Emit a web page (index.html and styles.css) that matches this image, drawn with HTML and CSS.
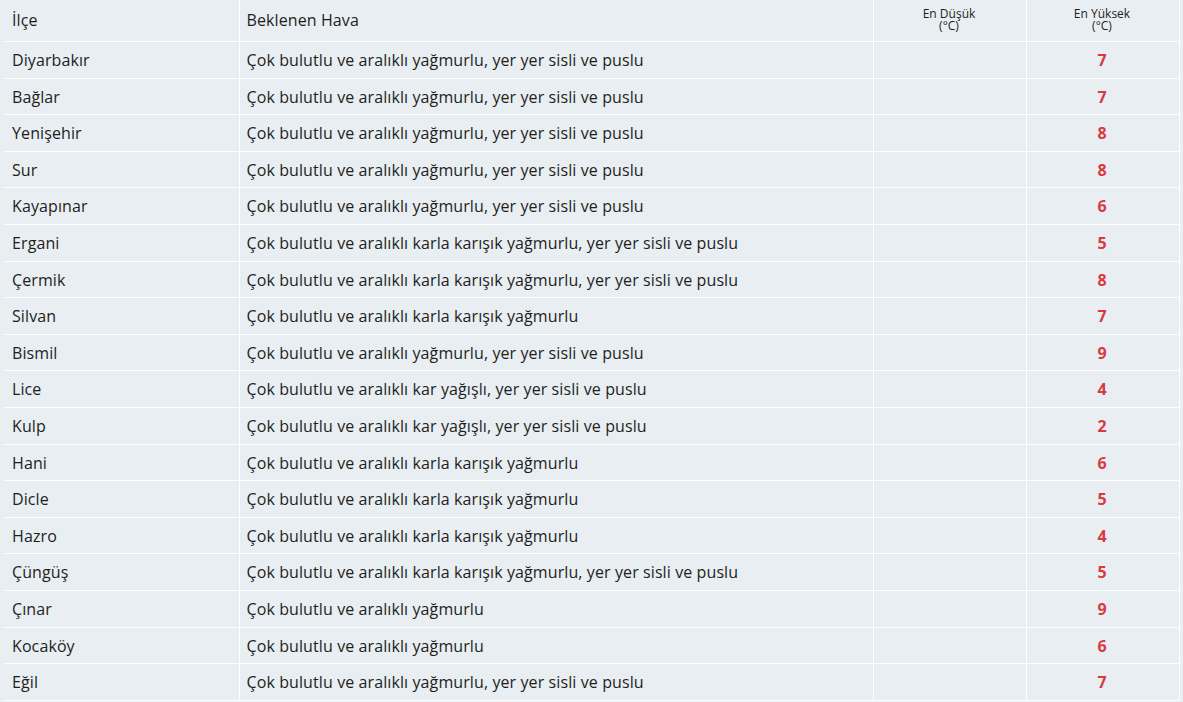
FILE: index.html
```html
<!DOCTYPE html>
<html lang="tr">
<head>
<meta charset="utf-8">
<title>İlçe Hava Tahmini</title>
<link rel="stylesheet" href="styles.css">
</head>
<body>
<div class="wrap">
<table class="forecast">
<colgroup>
<col class="c-ilce"><col class="c-hava"><col class="c-min"><col class="c-max">
</colgroup>
<thead>
<tr>
<th class="left">İlçe</th>
<th class="left">Beklenen Hava</th>
<th class="small">En Düşük<br>(°C)</th>
<th class="small">En Yüksek<br>(°C)</th>
</tr>
</thead>
<tbody>
<tr><td>Diyarbakır</td><td>Çok bulutlu ve aralıklı yağmurlu, yer yer sisli ve puslu</td><td></td><td class="max">7</td></tr>
<tr><td>Bağlar</td><td>Çok bulutlu ve aralıklı yağmurlu, yer yer sisli ve puslu</td><td></td><td class="max">7</td></tr>
<tr><td>Yenişehir</td><td>Çok bulutlu ve aralıklı yağmurlu, yer yer sisli ve puslu</td><td></td><td class="max">8</td></tr>
<tr><td>Sur</td><td>Çok bulutlu ve aralıklı yağmurlu, yer yer sisli ve puslu</td><td></td><td class="max">8</td></tr>
<tr><td>Kayapınar</td><td>Çok bulutlu ve aralıklı yağmurlu, yer yer sisli ve puslu</td><td></td><td class="max">6</td></tr>
<tr><td>Ergani</td><td>Çok bulutlu ve aralıklı karla karışık yağmurlu, yer yer sisli ve puslu</td><td></td><td class="max">5</td></tr>
<tr><td>Çermik</td><td>Çok bulutlu ve aralıklı karla karışık yağmurlu, yer yer sisli ve puslu</td><td></td><td class="max">8</td></tr>
<tr><td>Silvan</td><td>Çok bulutlu ve aralıklı karla karışık yağmurlu</td><td></td><td class="max">7</td></tr>
<tr><td>Bismil</td><td>Çok bulutlu ve aralıklı yağmurlu, yer yer sisli ve puslu</td><td></td><td class="max">9</td></tr>
<tr><td>Lice</td><td>Çok bulutlu ve aralıklı kar yağışlı, yer yer sisli ve puslu</td><td></td><td class="max">4</td></tr>
<tr><td>Kulp</td><td>Çok bulutlu ve aralıklı kar yağışlı, yer yer sisli ve puslu</td><td></td><td class="max">2</td></tr>
<tr><td>Hani</td><td>Çok bulutlu ve aralıklı karla karışık yağmurlu</td><td></td><td class="max">6</td></tr>
<tr><td>Dicle</td><td>Çok bulutlu ve aralıklı karla karışık yağmurlu</td><td></td><td class="max">5</td></tr>
<tr><td>Hazro</td><td>Çok bulutlu ve aralıklı karla karışık yağmurlu</td><td></td><td class="max">4</td></tr>
<tr><td>Çüngüş</td><td>Çok bulutlu ve aralıklı karla karışık yağmurlu, yer yer sisli ve puslu</td><td></td><td class="max">5</td></tr>
<tr><td>Çınar</td><td>Çok bulutlu ve aralıklı yağmurlu</td><td></td><td class="max">9</td></tr>
<tr><td>Kocaköy</td><td>Çok bulutlu ve aralıklı yağmurlu</td><td></td><td class="max">6</td></tr>
<tr><td>Eğil</td><td>Çok bulutlu ve aralıklı yağmurlu, yer yer sisli ve puslu</td><td></td><td class="max">7</td></tr>
</tbody>
</table>
</div>
</body>
</html>
```
FILE: styles.css
```css
html, body {
  margin: 0;
  padding: 0;
  background: #e8eef1;
}
body {
  font-family: "Open Sans", "Liberation Sans", sans-serif;
  color: #1e1e1e;
  font-size: 16px;
}
.wrap {
  width: 1183px;
  height: 702px;
  box-sizing: border-box;
  padding-left: 4px;
  background: #e8eef1;
  overflow: hidden;
}
.forecast {
  border-collapse: collapse;
  table-layout: fixed;
  width: 1175px;
  background: #e8eef1;
}
.c-ilce { width: 235px; }
.c-hava { width: 634px; }
.c-min { width: 153px; }
.c-max { width: 153px; }

.forecast th,
.forecast td {
  border-right: 1px solid #fff;
  border-bottom: 1px solid #fff;
  padding: 8px 8px 8px 7px;
  line-height: 19.6px;
  vertical-align: middle;
  white-space: nowrap;
  letter-spacing: 0.1px;
}
.forecast th {
  height: 25px;
  padding-top: 8px;
  padding-bottom: 8px;
  font-weight: normal;
  text-align: left;
}
.forecast th.small {
  font-size: 12px;
  line-height: 12px;
  letter-spacing: 0;
  text-align: center;
  padding-top: 7px;
  padding-bottom: 9px;
}
.forecast td {
  padding-top: 9px;
  padding-bottom: 7px;
}
.forecast td:first-child,
.forecast th:first-child {
  padding-left: 8px;
}
.forecast td.max {
  text-align: center;
  font-weight: bold;
  color: #d9393f;
  letter-spacing: 0;
}
```
